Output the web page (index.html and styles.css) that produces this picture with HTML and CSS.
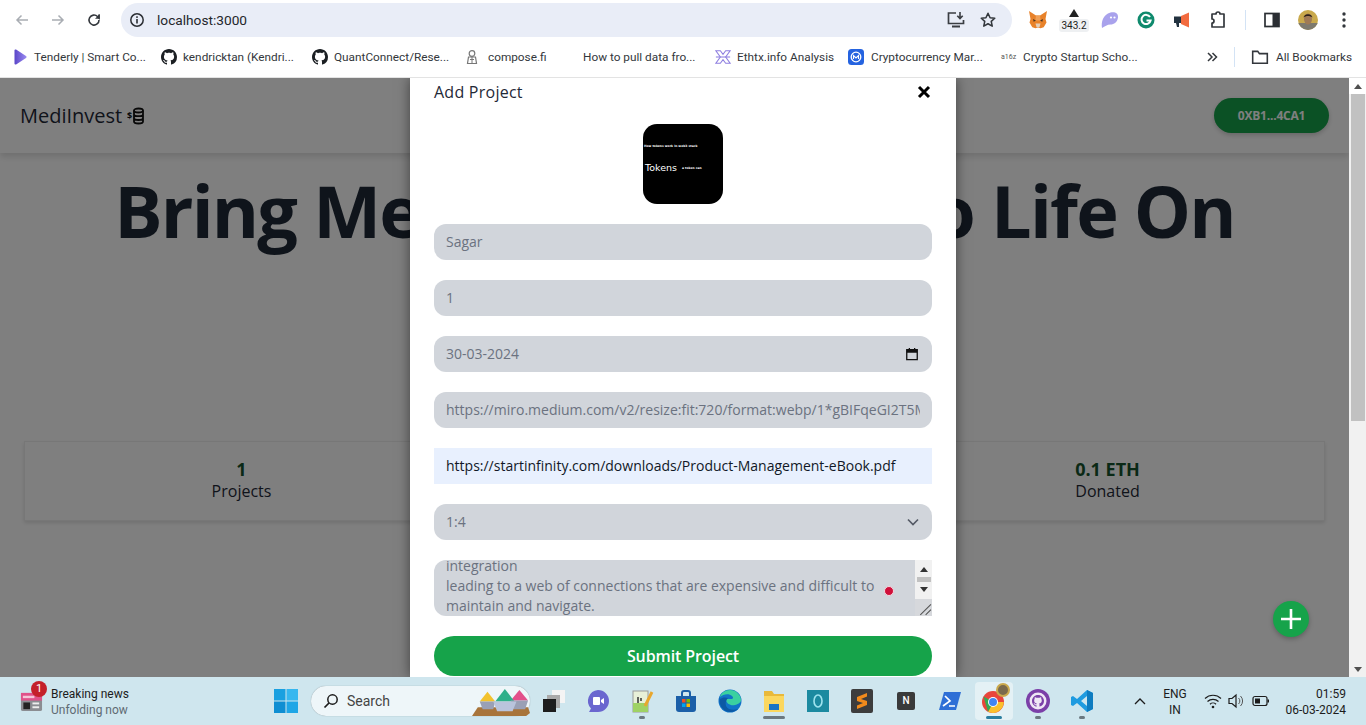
FILE: index.html
```html
<!DOCTYPE html>
<html lang="en">
<head>
<meta charset="utf-8">
<title>MediInvest</title>
<link rel="stylesheet" href="styles.css">
</head>
<body>
<div class="window">
  <header class="toolbar">
    <div class="nav">
      <svg class="nav-icon" viewBox="0 0 16 16"><path d="M14 8H3M7.500 3.500 3 8l4.500 4.500" fill="none" stroke="#a9adb3" stroke-width="1.500"/></svg>
      <svg class="nav-icon" viewBox="0 0 16 16"><path d="M2 8h11M8.500 3.500 13 8l-4.500 4.500" fill="none" stroke="#a9adb3" stroke-width="1.500"/></svg>
      <svg class="nav-icon" viewBox="0 0 16 16"><path d="M13 8a5 5 0 1 1-1.500-3.500L13 6V2.500" fill="none" stroke="#33373c" stroke-width="1.600"/><path d="M13.700 2v4.700H9z" fill="#33373c"/></svg>
    </div>
    <div class="omnibox">
      <span class="info-wrap"><svg class="info" viewBox="0 0 16 16"><circle cx="8" cy="8" r="6.200" fill="none" stroke="#2b2e33" stroke-width="1.500"/><rect x="7.200" y="7" width="1.600" height="4.500" fill="#2b2e33"/><rect x="7.200" y="4.300" width="1.600" height="1.600" fill="#2b2e33"/></svg></span>
      <span class="url">localhost:3000</span>
      <svg class="omni-icon install" viewBox="0 0 20 20"><path d="M10 3H2.500v10.500h15V10" fill="none" stroke="#3a3d42" stroke-width="1.700"/><path d="M6 16.500h8" stroke="#3a3d42" stroke-width="2"/><path d="M14 2v6M11.300 5.700 14 8.500l2.700-2.800" fill="none" stroke="#3a3d42" stroke-width="1.600"/></svg>
      <svg class="omni-icon" viewBox="0 0 20 20"><path d="m10 2.500 2.300 5 5.200.6-3.900 3.500 1.100 5.300L10 14.200l-4.700 2.700 1.100-5.300L2.500 8.100l5.200-.6z" fill="none" stroke="#33373c" stroke-width="1.700" stroke-linejoin="round"/></svg>
    </div>
    <div class="extensions">
      <svg class="ext" viewBox="0 0 20 20"><path d="M1 1l7 4.500h4L19 1l-1.500 8 1 3.500-2.800 4.700-3.200 1-2.500-.8-2.500.8-3.200-1-2.800-4.700 1-3.500z" fill="#e8822a"/><path d="M8 5.500h4l.7 5h-5.400z" fill="#f0a056"/><path d="M5 9l3 1.500-2.300 1.200zM15 9l-3 1.500 2.300 1.200z" fill="#4a3322"/><path d="M7.500 13.500h5l-1 3.700h-3z" fill="#e3cfba"/></svg>
      <div class="ext-badge"><svg class="tri" viewBox="0 0 10 8"><path d="M5 0l5 8H0z" fill="#222"/></svg><span class="badge-text">343.2</span></div>
      <svg class="ext" viewBox="0 0 20 20"><path d="M2 18C1 12 3 4.500 10.500 2.500c4.500-1 8 .8 7.500 5-.5 4.500-4 7-7.500 7-3.500 0-5.500 2-8.500 3.500z" fill="#a9a2ec"/><circle cx="11" cy="7.500" r="1.100" fill="#fff"/><circle cx="14.500" cy="7.500" r="1.100" fill="#fff"/></svg>
      <svg class="ext" viewBox="0 0 20 20"><circle cx="10" cy="10" r="8.500" fill="#0f8a6d"/><path d="M14 7a4.600 4.600 0 1 0 .6 3.500H10.500" fill="none" stroke="#fff" stroke-width="2"/></svg>
      <svg class="ext" viewBox="0 0 20 20"><path d="M9 6l8-3.500v15L9 14z" fill="#f26b3f"/><path d="M2 6.500h7v6.500H2z" fill="#22323f"/><path d="M4 13h3v4H5z" fill="#22323f"/></svg>
      <svg class="ext" viewBox="0 0 20 20"><path d="M4 4h4a2 2 0 0 1 4 0h4v13H4v-4a2 2 0 0 0 0-4z" fill="none" stroke="#33373c" stroke-width="1.700" stroke-linejoin="round"/></svg>
      <span class="tool-sep"></span>
      <svg class="ext" viewBox="0 0 20 20"><rect x="3" y="3.500" width="14" height="13" fill="none" stroke="#2b2e33" stroke-width="1.700"/><rect x="10.500" y="3.500" width="6.500" height="13" fill="#2b2e33"/></svg>
      <svg class="ext" viewBox="0 0 20 20"><defs><clipPath id="face-clip"><ellipse cx="10" cy="10" rx="10" ry="10"/></clipPath></defs><g clip-path="url(#face-clip)"><rect width="20" height="20" fill="#c9a94c"/><rect y="13" width="20" height="7" fill="#7e7a6e"/><ellipse cx="10" cy="9" rx="4" ry="5.500" fill="#a07a55"/><path d="M5.500 7.500C6 3 14 3 14.500 7.500 12 5.500 8 5.500 5.500 7.500z" fill="#2d2118"/></g></svg>
      <svg class="ext" viewBox="0 0 20 20"><circle cx="10" cy="4" r="1.700" fill="#33373c"/><circle cx="10" cy="10" r="1.700" fill="#33373c"/><circle cx="10" cy="16" r="1.700" fill="#33373c"/></svg>
    </div>
  </header>

  <nav class="bookmarks">
    <div class="bm bm-a"><svg class="bm-icon" viewBox="0 0 16 16"><defs><linearGradient id="tenderly" x1="0" x2="1" y1="0" y2="0"><stop offset="0" stop-color="#5a45c8"/><stop offset="1" stop-color="#9b8cf0"/></linearGradient></defs><path d="M2.500 1.500c0-1 1-1.300 2-.8l9.500 6.300c.8.500.8 1.500 0 2L4.500 15.300c-1 .5-2 .2-2-.8z" fill="url(#tenderly)"/></svg><span>Tenderly | Smart Co...</span></div>
    <div class="bm bm-b"><svg class="bm-icon" viewBox="0 0 16 16"><path fill="#1b1f23" d="M8 0C3.580 0 0 3.580 0 8c0 3.540 2.290 6.530 5.470 7.590.4.070.55-.17.55-.38 0-.19-.01-.82-.01-1.490-2.010.37-2.530-.49-2.690-.94-.09-.23-.48-.94-.82-1.130-.28-.15-.68-.52-.01-.53.63-.01 1.080.58 1.230.82.72 1.210 1.870.87 2.330.66.07-.52.28-.87.51-1.070-1.780-.2-3.640-.89-3.640-3.950 0-.87.31-1.590.82-2.150-.08-.2-.36-1.020.08-2.120 0 0 .67-.21 2.200.82.64-.18 1.320-.27 2-.27.68 0 1.360.09 2 .27 1.530-1.040 2.200-.82 2.200-.82.44 1.100.16 1.920.08 2.120.51.56.82 1.270.82 2.150 0 3.070-1.870 3.750-3.650 3.950.29.25.54.73.54 1.480 0 1.070-.01 1.930-.01 2.200 0 .21.15.46.55.38A8.013 8.013 0 0016 8c0-4.420-3.580-8-8-8z"/></svg><span>kendricktan (Kendri...</span></div>
    <div class="bm bm-c"><svg class="bm-icon" viewBox="0 0 16 16"><path fill="#1b1f23" d="M8 0C3.580 0 0 3.580 0 8c0 3.540 2.290 6.530 5.470 7.590.4.070.55-.17.55-.38 0-.19-.01-.82-.01-1.490-2.010.37-2.530-.49-2.690-.94-.09-.23-.48-.94-.82-1.130-.28-.15-.68-.52-.01-.53.63-.01 1.080.58 1.230.82.72 1.210 1.870.87 2.330.66.07-.52.28-.87.51-1.070-1.780-.2-3.640-.89-3.640-3.950 0-.87.31-1.590.82-2.150-.08-.2-.36-1.020.08-2.120 0 0 .67-.21 2.200.82.64-.18 1.320-.27 2-.27.68 0 1.360.09 2 .27 1.530-1.040 2.200-.82 2.200-.82.44 1.100.16 1.920.08 2.120.51.56.82 1.270.82 2.150 0 3.070-1.870 3.750-3.650 3.950.29.25.54.73.54 1.480 0 1.070-.01 1.930-.01 2.200 0 .21.15.46.55.38A8.013 8.013 0 0016 8c0-4.420-3.580-8-8-8z"/></svg><span>QuantConnect/Rese...</span></div>
    <div class="bm bm-d"><svg class="bm-icon" viewBox="0 0 16 16"><circle cx="8" cy="4.500" r="2.800" fill="none" stroke="#777" stroke-width="1.200"/><path d="M4.500 8h7l1 6.500h-9z" fill="none" stroke="#777" stroke-width="1.200"/><path d="M8 8v6.500M6 10.500h4" stroke="#777" stroke-width="1"/></svg><span>compose.fi</span></div>
    <div class="bm bm-e"><span>How to pull data fro...</span></div>
    <div class="bm bm-f"><svg class="bm-icon" viewBox="0 0 18 18"><path d="M1 2h5l3 4 3-4h5L12 9l5 7h-5L9 12l-3 4H1l5-7z" fill="none" stroke="#8f7fe0" stroke-width="1.200"/><path d="M1 9h16" stroke="#8f7fe0" stroke-width="1.200"/></svg><span>Ethtx.info Analysis</span></div>
    <div class="bm bm-g"><svg class="bm-icon" viewBox="0 0 16 16"><rect width="16" height="16" rx="3.500" fill="#2563e0"/><circle cx="8" cy="8" r="4.800" fill="none" stroke="#fff" stroke-width="1.300"/><path d="M5.500 10V6.500L8 9l2.500-2.500V10" fill="none" stroke="#fff" stroke-width="1.100"/></svg><span>Cryptocurrency Mar...</span></div>
    <div class="bm bm-h"><span class="a16z">a16z</span><span>Crypto Startup Scho...</span></div>
    <svg class="more" viewBox="0 0 12 12"><path d="M2 2l4 4-4 4M6.500 2l4 4-4 4" fill="none" stroke="#33373c" stroke-width="1.500"/></svg>
    <span class="bm-sep"></span>
    <div class="bm all"><svg class="folder" viewBox="0 0 16 16"><path d="M1.500 3h4.500l1.500 2h7v8.500h-13z" fill="none" stroke="#33373c" stroke-width="1.400"/></svg><span>All Bookmarks</span></div>
  </nav>

  <main class="viewport">
    <div class="page">
      <div class="topbar">
        <div class="brand">MediInvest <svg class="coins" viewBox="0 0 18 18"><ellipse cx="11.500" cy="3.500" rx="4.500" ry="2" fill="none" stroke="#111" stroke-width="1.800"/><path d="M7 3.500v11c0 1 2 2 4.500 2s4.500-1 4.500-2v-11M7 7.200c0 1 2 2 4.500 2s4.500-1 4.500-2M7 11c0 1 2 2 4.500 2s4.500-1 4.500-2" fill="none" stroke="#111" stroke-width="1.800"/><text x="0" y="12" class="coin-dollar">$</text></svg></div>
        <button class="wallet">0XB1...4CA1</button>
      </div>
      <h1 class="hero">Bring Medical Projects To Life On</h1>
      <section class="stats">
        <div class="stat"><div class="stat-num">1</div><div class="stat-label">Projects</div></div>
        <div class="stat"><div class="stat-num">1</div><div class="stat-label">Backings</div></div>
        <div class="stat"><div class="stat-num">0.1 ETH</div><div class="stat-label">Donated</div></div>
      </section>
    </div>
    <div class="scrollbar">
      <span class="sb-btn"><span class="arrow-up"></span></span>
      <span class="sb-thumb"></span>
      <span class="sb-track"></span>
      <span class="sb-btn"><span class="arrow-down"></span></span>
    </div>

    <div class="overlay">
      <form class="modal">
        <div class="modal-head">
          <span class="modal-title">Add Project</span>
          <svg class="close" viewBox="0 0 14 14"><path d="M2 2l10 10M12 2L2 12" stroke="#000" stroke-width="3"/></svg>
        </div>
        <div class="thumb">
          <div class="thumb-line">How tokens work in web3 stack</div>
          <div class="thumb-row"><span class="thumb-title">Tokens</span><span class="thumb-small">a token can</span></div>
        </div>
        <div class="field">Sagar</div>
        <div class="field">1</div>
        <div class="field field-date"><span>30-03-2024</span><svg class="cal" viewBox="0 0 16 16"><path d="M2 3h12v11.500H2z" fill="none" stroke="#111" stroke-width="1.500"/><path d="M2 3h12v3.500H2z" fill="#111"/><path d="M5 1v3M11 1v3" stroke="#111" stroke-width="1.500"/></svg></div>
        <div class="field"><span class="field-clip">https://miro.medium.com/v2/resize:fit:720/format:webp/1*gBIFqeGI2T5M</span></div>
        <div class="field field-auto">https://startinfinity.com/downloads/Product-Management-eBook.pdf</div>
        <div class="field field-select"><span>1:4</span><svg class="chev" viewBox="0 0 12 8"><path d="M1 1.500l5 5 5-5" fill="none" stroke="#555b66" stroke-width="1.700"/></svg></div>
        <div class="textarea">
          <div class="ta-text">
            <div>integration</div>
            <div>leading to a web of connections that are expensive and difficult to</div>
            <div>maintain and navigate.</div>
          </div>
          <div class="ta-bar">
            <span class="ta-up"></span>
            <span class="ta-thumb"></span>
            <span class="ta-down"></span>
            <span class="ta-grip"><svg viewBox="0 0 16 16"><path d="M5 15 15 5M10 15l5-5" stroke="#555" stroke-width="1"/></svg></span>
          </div>
          <span class="grammar-dot"></span>
        </div>
        <button class="submit" type="button">Submit Project</button>
      </form>
    </div>

    <button class="fab" aria-label="Add project"><svg viewBox="0 0 22 22"><path d="M11 1v20M1 11h20" stroke="#fff" stroke-width="2.600"/></svg></button>
  </main>

  <footer class="taskbar">
    <div class="news">
      <span class="news-icon">
        <svg viewBox="0 0 24 24"><rect x="1" y="3" width="22" height="19" rx="2" fill="#8b8d92"/><rect x="1" y="3" width="22" height="8" fill="#e0528a"/><rect x="3" y="6" width="12" height="2.500" fill="#f5c6d8"/><rect x="3.500" y="13" width="7" height="7" fill="#222"/><rect x="13" y="13" width="7" height="2" fill="#eee"/><rect x="13" y="17" width="7" height="2" fill="#eee"/></svg>
        <span class="news-badge">1</span>
      </span>
      <div class="news-text"><div class="news-title">Breaking news</div><div class="news-sub">Unfolding now</div></div>
    </div>
    <svg class="win" viewBox="0 0 24 24"><path d="M0 0h11.500v11.500H0z" fill="#1aa0e0"/><path d="M12.500 0H24v11.500H12.500z" fill="#37b7ef"/><path d="M0 12.500h11.500V24H0z" fill="#0f8ed2"/><path d="M12.500 12.500H24V24H12.500z" fill="#1fa6e6"/></svg>
    <div class="search">
      <svg class="search-icon" viewBox="0 0 16 16"><circle cx="9.500" cy="6.500" r="4.700" fill="none" stroke="#1c1c1c" stroke-width="1.500"/><path d="M6 10l-4.500 4.500" stroke="#1c1c1c" stroke-width="1.700"/></svg>
      <span class="search-text">Search</span>
      <svg class="holi" viewBox="0 0 60 30"><path d="M0 30l6-9h52l2 6-4 3z" fill="#a8743a"/><path d="M8 15l8-10 8 10z" fill="#f2c22e"/><path d="M40 14l9-11 9 11z" fill="#e2508a"/><path d="M24 15l10-13 10 13z" fill="#2fb08a"/><path d="M8 15h16l-2 8H11zM40 14h18l-3 9H43z" fill="#9aa0b5"/><path d="M22 15h24l-4 10H26z" fill="#b9c4dc"/></svg>
    </div>
    <div class="apps">
      <span class="app"><svg viewBox="0 0 24 24"><rect x="10" y="1" width="13" height="13" fill="#f4f4f4"/><rect x="5" y="6" width="13" height="13" fill="#aaa"/><rect x="1" y="10" width="13" height="13" fill="#1d1d1d"/></svg></span>
      <span class="app"><svg viewBox="0 0 24 24"><path d="M12 1a11 11 0 0 1 0 22H3l2-3.500A11 11 0 0 1 12 1z" fill="#6a66cf"/><rect x="7" y="8" width="7" height="8" rx="1" fill="#fff"/><path d="M15 11l3-2v6l-3-2z" fill="#fff"/></svg></span>
      <span class="app has-dot"><svg viewBox="0 0 24 24"><rect x="3" y="2" width="15" height="21" fill="#e8f0d8" stroke="#9a9a9a"/><rect x="3" y="14" width="15" height="9" fill="#9fd264"/><path d="M8 8v6M11 9v3" stroke="#333" stroke-width="1.500"/><path d="M15 17 22 3" stroke="#e8a72e" stroke-width="3"/></svg></span>
      <span class="app"><svg viewBox="0 0 24 24"><path d="M2 7h20v13a3 3 0 0 1-3 3H5a3 3 0 0 1-3-3z" fill="#1b5fa8"/><path d="M8 7V4a2 2 0 0 1 2-2h4a2 2 0 0 1 2 2v3" fill="none" stroke="#1b5fa8" stroke-width="2"/><rect x="8" y="10" width="3.500" height="3.500" fill="#f25022"/><rect x="12.500" y="10" width="3.500" height="3.500" fill="#7fba00"/><rect x="8" y="14.500" width="3.500" height="3.500" fill="#00a4ef"/><rect x="12.500" y="14.500" width="3.500" height="3.500" fill="#ffb900"/></svg></span>
      <span class="app"><svg viewBox="0 0 24 24"><circle cx="12" cy="12" r="11.500" fill="#1173c8"/><path d="M23 11c0-5-5-10-11-10C7 1 3 4 2 8c3-3 9-4 12-1 1.500 1.500 1.500 3-1 3H8c0 5 5 7 9 6 3-.5 6-2.500 6-5z" fill="#3bd0a0"/><path d="M2 8C0 14 4 23 12 23c3 0 6-1 8-3-4 1.500-10 1-12-3-1-3 0-6 2-8-3-1-6-.500-8 1z" fill="#0c59a4"/></svg></span>
      <span class="app has-bar"><svg viewBox="0 0 24 24"><path d="M2 2h8l2 3h10v6H2z" fill="#e9b93a"/><path d="M2 7h20v16H2z" fill="#fbd75e"/><rect x="7" y="15" width="10" height="6" fill="#1b74c4"/></svg></span>
      <span class="app"><svg viewBox="0 0 24 24"><rect x="1" y="1" width="22" height="22" fill="#1c8aa0"/><ellipse cx="12" cy="12" rx="4" ry="6" fill="none" stroke="#9fe4ef" stroke-width="1.600"/></svg></span>
      <span class="app"><svg viewBox="0 0 24 24"><rect x="1" y="0" width="22" height="24" rx="2" fill="#3d3d3d"/><path d="M17 4 7 8v4l6 2-6 2.500V20l10-4v-4l-6-2 6-2.500z" fill="#f28b1c"/></svg></span>
      <span class="app"><span class="notion">N</span></span>
      <span class="app"><svg viewBox="0 0 24 24"><path d="M6 3h17l-5 18H1z" fill="#2f6fd6"/><path d="M7 7l5 5-7 5M11 17h6" fill="none" stroke="#fff" stroke-width="1.700"/></svg></span>
      <span class="app app-active"><svg viewBox="0 0 24 24"><circle cx="11" cy="13" r="11" fill="#e8453c"/><path d="M11 13h10.800A11 11 0 0 1 6 22.800z" fill="#fbc02d"/><path d="M1.500 7.500 6 22.800 11.500 13z" fill="#34a853"/><circle cx="11" cy="13" r="5" fill="#fff"/><circle cx="11" cy="13" r="4" fill="#4285f4"/></svg><span class="chrome-avatar"></span></span>
      <span class="app has-dot"><svg viewBox="0 0 24 24"><circle cx="12" cy="12" r="12" fill="#7b3fa8"/><circle cx="12" cy="12" r="8.500" fill="#efe6f5"/><path fill="#7b3fa8" transform="translate(6 6) scale(.75)" d="M8 0C3.580 0 0 3.580 0 8c0 3.540 2.290 6.530 5.470 7.590.4.070.55-.17.55-.38V13.500c-2.200.4-2.700-1-2.700-1-.4-1-.9-1.200-.9-1.200-.7-.5.050-.5.050-.5.800.05 1.200.8 1.200.8.700 1.200 1.900.9 2.300.7.070-.5.3-.9.500-1.100-1.800-.2-3.600-.9-3.600-4 0-.9.300-1.600.8-2.100-.08-.2-.36-1 .08-2.100 0 0 .7-.2 2.200.8a7.600 7.600 0 0 1 4 0c1.500-1 2.200-.8 2.200-.8.440 1.100.16 1.900.08 2.100.5.500.8 1.200.8 2.100 0 3.100-1.900 3.800-3.600 4 .3.250.5.700.5 1.500v2.200c0 .2.150.46.550.38A8 8 0 0 0 16 8c0-4.420-3.580-8-8-8z"/></svg></span>
      <span class="app has-dot"><svg viewBox="0 0 24 24"><path d="M17 1l6 3v16l-6 3L7 14l-4 3-2-1V8l2-1 4 3zM17 7l-6 5 6 5z" fill="#1f9be0"/><path d="M17 1l6 3v16l-6 3z" fill="#0f7cc0"/></svg></span>
    </div>
    <svg class="tray-chev" viewBox="0 0 12 8"><path d="M1 7l5-5 5 5" fill="none" stroke="#1c1c1c" stroke-width="1.300"/></svg>
    <div class="lang"><div>ENG</div><div>IN</div></div>
    <svg class="tray wifi" viewBox="0 0 18 16"><path d="M1 5.500a11.500 11.500 0 0 1 16 0M3.500 8.500a8 8 0 0 1 11 0M6 11.200a4.300 4.300 0 0 1 6 0" fill="none" stroke="#1c1c1c" stroke-width="1.200"/><circle cx="9" cy="14" r="1.300" fill="#1c1c1c"/></svg>
    <svg class="tray speaker" viewBox="0 0 18 16"><path d="M2 5.500h3L9 2v12l-4-3.500H2z" fill="none" stroke="#1c1c1c" stroke-width="1.200"/><path d="M11.500 5a4 4 0 0 1 0 6M13.500 3a7 7 0 0 1 0 10" fill="none" stroke="#555" stroke-width="1"/></svg>
    <svg class="tray battery" viewBox="0 0 18 16"><rect x="1" y="3.500" width="14" height="9" rx="2" fill="none" stroke="#1c1c1c" stroke-width="1.200"/><rect x="3" y="5.500" width="5" height="5" fill="#1c1c1c"/><rect x="15.500" y="6.500" width="1.500" height="3" fill="#1c1c1c"/></svg>
    <div class="clock"><div>01:59</div><div>06-03-2024</div></div>
  </footer>
</div>
</body>
</html>
```

FILE: styles.css
```css
* { box-sizing: border-box; }
html, body { margin: 0; padding: 0; height: 100%; overflow: hidden; }
body { font-family: "Open Sans", "Liberation Sans", sans-serif; background: #fff; }
svg { display: block; flex: none; }
.window { width: 1366px; height: 725px; display: flex; flex-direction: column; }

/* Browser toolbar */
.toolbar { height: 40px; display: flex; align-items: center; background: #fff; flex: none; }
.nav { display: flex; width: 121px; padding-left: 14px; gap: 20px; }
.nav-icon { width: 16px; height: 16px; }
.omnibox { width: 891px; height: 34px; background: #e9edf7; border-radius: 17px; display: flex; align-items: center; padding: 0 15px 0 8px; }
.info-wrap { width: 16px; display: flex; margin-right: 12px; }
.info { width: 16px; height: 16px; }
.url { font: 13.700px/20px Roboto, sans-serif; color: #24272b; flex: 1; }
.omni-icon { width: 18px; height: 18px; }
.install { margin-right: 13px; width: 20px; height: 20px; }
.extensions { flex: 1; display: flex; align-items: center; padding-left: 16px; gap: 16px; }
.ext { width: 20px; height: 20px; }
.ext-badge { width: 20px; height: 26px; display: flex; flex-direction: column; align-items: center; margin-top: 4px; }
.tri { width: 10px; height: 8px; }
.badge-text { font: 10px/13px Roboto, sans-serif; color: #222; background: #eef0f2; border-radius: 3px; padding: 0 2px; margin-top: 2px; }
.tool-sep { width: 1px; height: 20px; background: #d3e3f5; margin-left: 1px; }

/* Bookmarks */
.bookmarks { height: 38px; display: flex; align-items: center; padding: 0 0 4px 12px; background: #fff; border-bottom: 1px solid #e3e3e3; flex: none; font: 11.800px/16px Roboto, sans-serif; color: #33373c; }
.bm { display: flex; align-items: center; gap: 6px; white-space: nowrap; }
.bm-icon { width: 16px; height: 16px; }
.bm-a { width: 149px; }
.bm-b { width: 151px; }
.bm-c { width: 152px; }
.bm-d { width: 119px; gap: 8px; }
.bm-e { width: 132px; }
.bm-f { width: 133px; }
.bm-g { width: 153px; gap: 7px; }
.bm-h { width: 205px; }
.a16z { font-size: 7px; width: 16px; color: #555; }
.more { width: 12px; height: 12px; }
.bm-sep { width: 1px; height: 20px; background: #d3e3f5; margin: 0 16px 0 16px; }
.folder { width: 18px; height: 18px; }
.all { gap: 7px; }

/* Viewport */
.viewport { flex: 1; position: relative; display: flex; min-height: 0; overflow: hidden; }
.page { width: 1349px; background: #fff; display: flex; flex-direction: column; align-items: stretch; overflow: hidden; }
.topbar { height: 75px; flex: none; display: flex; align-items: center; justify-content: space-between; padding: 0 20px; box-shadow: 0 4px 6px rgba(0,0,0,.12); }
.brand { font-size: 20px; line-height: 28px; color: #1f2937; display: flex; align-items: center; gap: 5px; }
.coins { width: 18px; height: 18px; }
.coin-dollar { font-size: 9px; font-weight: 700; fill: #111; }
.wallet { width: 115px; height: 35px; border: 0; border-radius: 18px; background: #16a34a; color: #fff; font: 700 12px/16px "Open Sans", sans-serif; letter-spacing: -.2px; box-shadow: 0 2px 5px rgba(0,0,0,.2); }
.hero { margin: 12px 0 0; text-align: center; font-size: 72px; line-height: 90px; font-weight: 700; letter-spacing: -1.800px; color: #1f2937; white-space: nowrap; }
.stats { margin: 186px 24px 0; height: 80px; flex: none; display: grid; grid-template-columns: repeat(3, 1fr); border: 1px solid #eeeeee; box-shadow: 0 2px 4px rgba(0,0,0,.12); }
.stat { display: flex; flex-direction: column; align-items: center; justify-content: center; padding-bottom: 2px; }
.stat-num { font-size: 18px; line-height: 22px; font-weight: 700; color: #14532d; }
.stat-label { font-size: 16px; line-height: 22px; color: #1f2937; }

/* Scrollbar */
.scrollbar { width: 17px; background: #f1f1f1; display: flex; flex-direction: column; align-items: center; position: relative; z-index: 3; }
.sb-btn { height: 16px; width: 17px; display: flex; align-items: center; justify-content: center; background: #f1f1f1; flex: none; }
.scrollbar .sb-btn:first-child { background: #fff; }
.arrow-up { border: 4px solid transparent; border-top: 0; border-bottom: 5px solid #505050; }
.arrow-down { border: 4px solid transparent; border-bottom: 0; border-top: 5px solid #505050; }
.sb-thumb { width: 14px; height: 327px; background: #c1c1c1; flex: none; }
.sb-track { flex: 1; }

/* Modal */
.overlay { position: absolute; inset: 0; background: rgba(0,0,0,.5); display: flex; justify-content: center; z-index: 2; }
.modal { width: 546px; height: 100%; background: #fff; padding: 2px 24px 0; display: flex; flex-direction: column; box-shadow: 0 0 12px rgba(0,0,0,.5); }
.modal-head { height: 24px; display: flex; align-items: center; justify-content: space-between; flex: none; padding-right: 1px; }
.modal-title { font-size: 16px; line-height: 24px; font-weight: 500; letter-spacing: .25px; color: #1f2937; }
.close { width: 14px; height: 14px; }
.thumb { width: 80px; height: 80px; border-radius: 14px; background: #000; margin: 20px auto; color: #fff; overflow: hidden; flex: none; padding-top: 20px; }
.thumb-line { font: 700 3px/4px "DejaVu Sans", sans-serif; white-space: nowrap; padding-left: 1px; }
.thumb-row { display: flex; align-items: center; gap: 5px; margin: 13px 0 0 2px; }
.thumb-title { font: 400 9.500px/13px "DejaVu Sans", sans-serif; }
.thumb-small { font: 700 3px/4px "DejaVu Sans", sans-serif; white-space: nowrap; }
.field { height: 36px; flex: none; border-radius: 12px; background: #d1d5db; color: #6b7280; font-size: 14px; line-height: 36px; padding: 0 12px; margin-bottom: 20px; white-space: nowrap; overflow: hidden; display: flex; align-items: center; justify-content: space-between; }
.field-clip { display: block; width: 100%; overflow: hidden; }
.field-date { padding-right: 13px; }
.cal { width: 14px; height: 14px; }
.field-auto { background: #e8f0fe; border-radius: 0; color: #111827; }
.chev { width: 12px; height: 8px; margin-right: 1px; }
.textarea { height: 56px; flex: none; position: relative; display: flex; background: #d1d5db; border-radius: 12px 0 0 12px; color: #6b7280; font-size: 14px; line-height: 20px; overflow: hidden; }
.ta-text { flex: 1; display: flex; flex-direction: column; justify-content: flex-end; padding-left: 12px; white-space: nowrap; overflow: hidden; }
.ta-bar { width: 17px; background: #f1f1f1; display: flex; flex-direction: column; align-items: center; padding-top: 7px; flex: none; }
.ta-up { border: 4px solid transparent; border-top: 0; border-bottom: 5px solid #333; flex: none; }
.ta-thumb { width: 14px; height: 5px; background: #c1c1c1; margin: 5px 0; flex: none; }
.ta-down { border: 4px solid transparent; border-bottom: 0; border-top: 5px solid #333; flex: none; }
.ta-grip { width: 17px; height: 17px; margin-top: auto; background: #d6d8dc; }
.grammar-dot { position: absolute; left: 450px; top: 26px; width: 10px; height: 10px; border-radius: 50%; background: #d0103a; border: 1px solid #f3d9df; }
.submit { height: 40px; flex: none; margin-top: 20px; border: 0; border-radius: 20px; background: #16a34a; color: #fff; font: 600 16px/24px "Open Sans", sans-serif; letter-spacing: -.1px; }

.fab { position: absolute; left: 1273px; top: 523px; width: 36px; height: 36px; padding: 7px; border: 0; border-radius: 50%; background: #16a34a; z-index: 4; box-shadow: 0 2px 5px rgba(0,0,0,.25); }
.fab svg { width: 22px; height: 22px; }

/* Taskbar */
.taskbar { height: 48px; flex: none; background: #cfe6ee; display: flex; align-items: center; color: #1c1c1c; font: 12px/16px Roboto, sans-serif; }
.news { width: 274px; display: flex; align-items: center; padding-left: 20px; gap: 8px; }
.news-icon { width: 23px; height: 23px; position: relative; }
.news-icon svg { width: 23px; height: 23px; }
.news-badge { position: absolute; left: 11px; top: -9px; width: 16px; height: 16px; border-radius: 50%; background: #c4202a; color: #fff; font: 11px/16px Roboto, sans-serif; text-align: center; }
.news-text { font-size: 12px; line-height: 16px; padding-top: 2px; }
.news-sub { color: #5f6b73; }
.win { width: 24px; height: 24px; margin-right: 13px; }
.search { width: 219px; height: 30px; border-radius: 15px; background: #eef6f9; box-shadow: 0 0 1px rgba(0,0,0,.4); display: flex; align-items: center; padding-left: 12px; }
.search-icon { width: 16px; height: 16px; margin-right: 8px; }
.search-text { font-size: 14px; color: #444; flex: 1; }
.holi { width: 58px; height: 29px; }
.apps { display: flex; margin-left: 2px; }
.app { width: 44px; height: 38px; display: flex; align-items: center; justify-content: center; position: relative; }
.app svg { width: 24px; height: 24px; }
.has-dot::after { content: ""; position: absolute; left: 19px; bottom: 1px; width: 6px; height: 3px; border-radius: 2px; background: #6b7880; }
.has-bar::after { content: ""; position: absolute; left: 11px; bottom: 1px; width: 22px; height: 3px; border-radius: 2px; background: #6b7880; }
.app-active { width: 38px; margin: 0 3px; background: #e4f1f5; border-radius: 4px; }
.app-active::after { content: ""; position: absolute; left: 11px; bottom: 1px; width: 16px; height: 3px; border-radius: 2px; background: #2a7ea0; }
.chrome-avatar { position: absolute; left: 21px; top: 1px; width: 14px; height: 14px; border-radius: 50%; background: #7a6a4c; border: 2px solid #caa94c; }
.notion { width: 18px; height: 18px; background: #3a3a3a; color: #fff; font: 500 10px/18px Roboto, sans-serif; text-align: center; border-radius: 2px; }
.tray-chev { width: 12px; height: 8px; margin-left: 30px; }
.lang { width: 40px; margin-left: 9px; padding-top: 2px; text-align: center; line-height: 16px; font-size: 12px; }
.tray { width: 18px; height: 16px; }
.wifi { margin-left: 9px; }
.speaker { margin-left: 5px; }
.battery { margin-left: 7px; }
.clock { flex: 1; text-align: right; padding: 2px 20px 0 0; font-size: 12px; line-height: 16px; }
```
